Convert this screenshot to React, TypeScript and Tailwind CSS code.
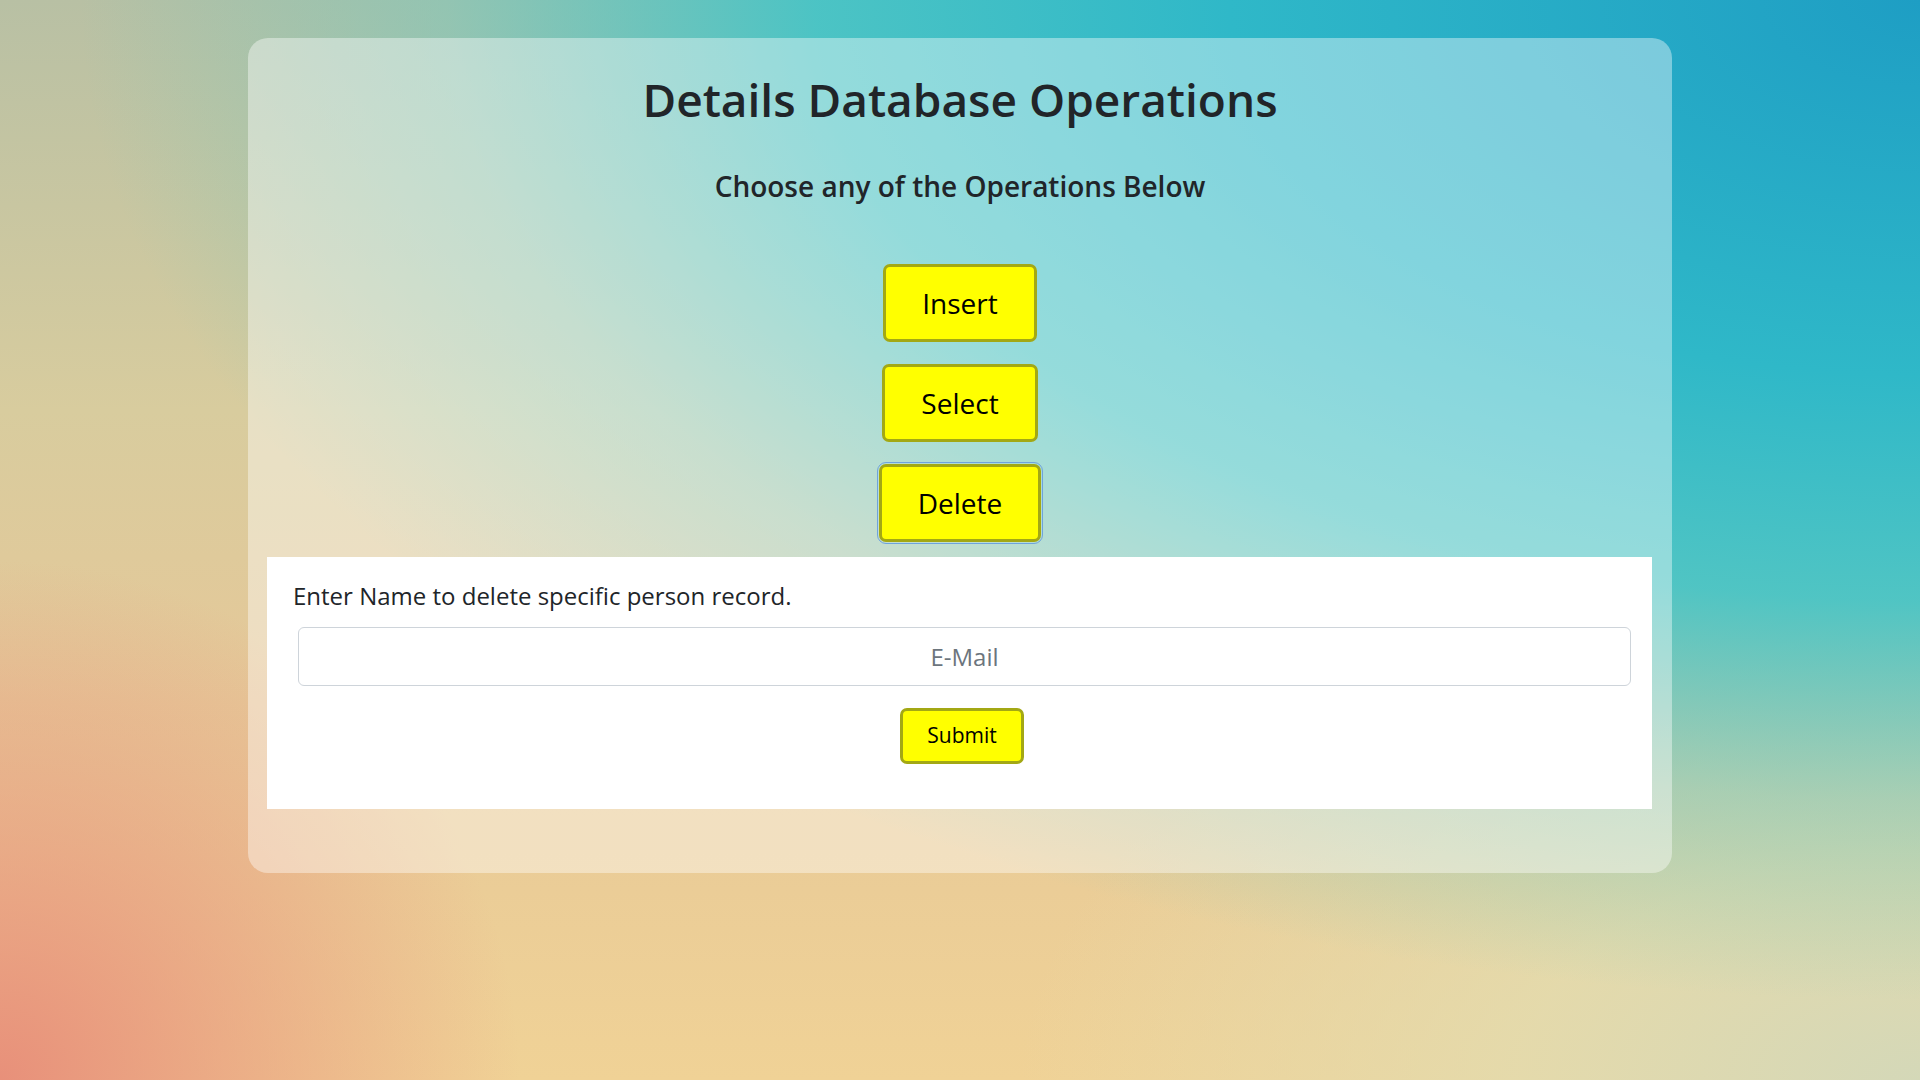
function OpButton({ label, focused }: { label: string; focused?: boolean }) {
  return (
    <button
      className={
        "h-[78px] px-[36px] bg-[#ffff00] border-[3px] border-[#a3a814] rounded-[7px] text-[28px] text-black " +
        (focused ? "outline outline-1 outline-[#6ea3dc] outline-offset-[1px]" : "")
      }
    >
      {label}
    </button>
  );
}

export default function App() {
  return (
    <div
      className="w-full min-h-[1080px] pt-[38px] pb-[207px] font-['Open_Sans',sans-serif] text-[#212529] bg-[radial-gradient(ellipse_2300px_1250px_at_100%_0%,#1e9ec4_0%,#2fb8c8_30%,rgba(64,196,200,0.9)_48%,rgba(110,200,192,0.5)_64%,rgba(150,205,185,0)_80%),radial-gradient(circle_at_0%_100%,#e8907a_0px,rgba(232,144,122,0)_520px),radial-gradient(ellipse_900px_500px_at_100%_100%,#d4d8b8_0%,rgba(226,220,176,0.8)_45%,rgba(232,220,170,0)_100%),linear-gradient(to_bottom,#b8c0a4_0%,#d8cc9e_38%,#e6c898_65%,#f0d296_100%)]"
    >
      <div className="mx-[248px] rounded-[20px] bg-white/40 pt-[31px] pb-[64px]">
        <h1 className="text-center text-[46px] leading-[60px] font-semibold">Details Database Operations</h1>
        <h4 className="mt-[39px] text-center text-[28px] leading-[36px] font-semibold">
          Choose any of the Operations Below
        </h4>

        <div className="mt-[60px] flex flex-col items-center gap-[22px]">
          <OpButton label="Insert" />
          <OpButton label="Select" />
          <OpButton label="Delete" focused />
        </div>

        <div className="mt-[15px] ml-[19px] mr-[20px] bg-white pt-[24px] pb-[45px] pl-[26px] pr-[21px]">
          <p className="text-[24px] leading-[30px] font-medium">Enter Name to delete specific person record.</p>
          <input
            className="mt-[16px] ml-[5px] w-[calc(100%-5px)] h-[59px] border border-[#ced4da] rounded-[6px] text-center text-[24px] placeholder:text-[#6c757d] outline-none"
            placeholder="E-Mail"
          />
          <div className="mt-[22px] flex justify-center">
            <button className="h-[56px] w-[124px] bg-[#ffff00] border-[3px] border-[#a3a814] rounded-[7px] text-[21px] text-black">
              Submit
            </button>
          </div>
        </div>
      </div>
    </div>
  );
}
